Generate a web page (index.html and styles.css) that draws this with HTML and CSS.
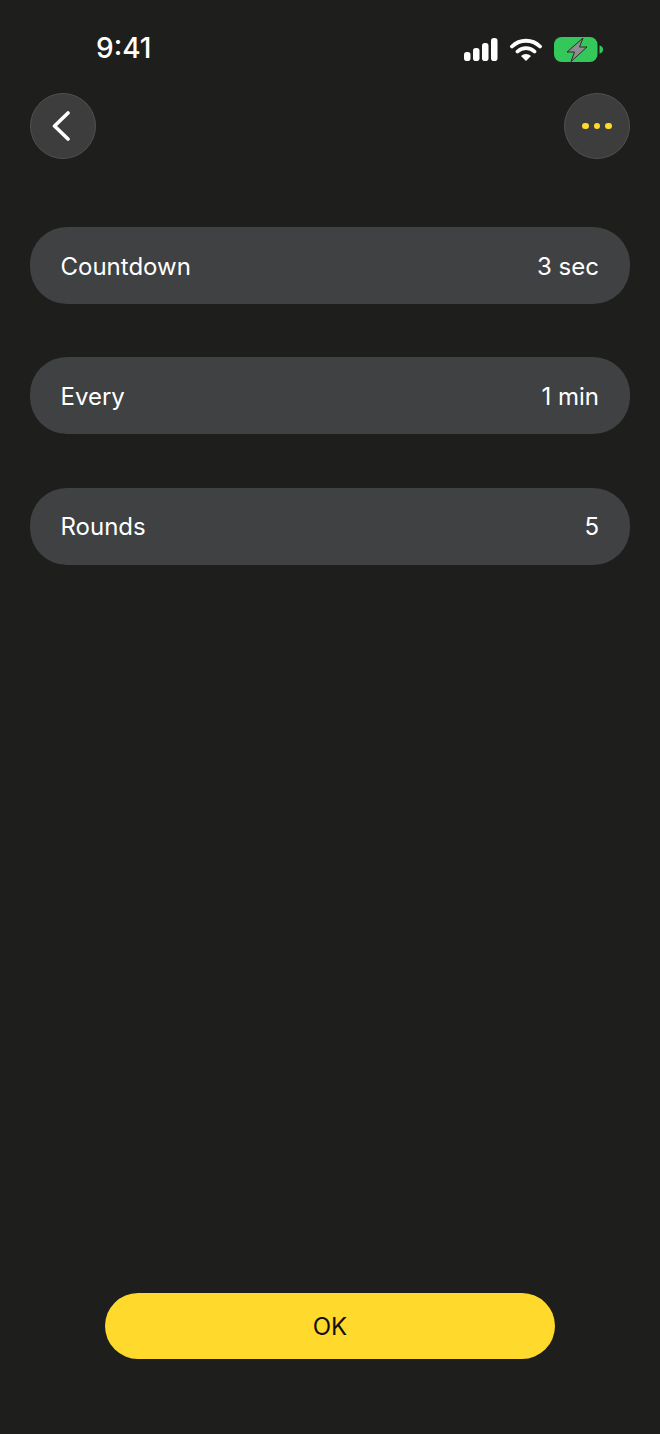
FILE: index.html
```html
<!DOCTYPE html>
<html lang="en">
<head>
<meta charset="utf-8">
<title>Interval timer</title>
<link rel="stylesheet" href="styles.css">
</head>
<body>
<div class="screen">
  <header class="status">
    <span class="time">9:41</span>
    <div class="status-icons">
      <svg class="signal" width="34" height="23" viewBox="0 0 34 23"><rect x="0" y="14" width="6.500" height="9" rx="2.800"/><rect x="9" y="10" width="6.500" height="13" rx="2.800"/><rect x="18" y="5" width="6.500" height="18" rx="2.800"/><rect x="27" y="0" width="6.500" height="23" rx="2.800"/></svg>
      <svg class="wifi" width="32" height="23" viewBox="0 0 32 23"><path d="M2 8.500C9.800 .8 22.200 .8 30 8.500M7.500 13.500C12.300 8.900 19.700 8.900 24.500 13.500" fill="none" stroke="#fff" stroke-width="3.800" stroke-linecap="round"/><path d="M11 18C13.800 15.300 18.200 15.300 21 18L16 23Z" fill="#fff"/></svg>
      <svg class="battery" width="50" height="25" viewBox="0 0 50 25"><rect x="0" y="0" width="43.500" height="25" rx="7.500" fill="#34c759"/><path d="M45.500 8.500c2.500.4 3.500 2 3.500 4s-1 3.600-3.500 4z" fill="#34c759"/><path d="M29 1 13 15h7.500L17 24.500 33 10h-7.500z" fill="#8e8e8e" stroke="#2b2b2b" stroke-width="1" stroke-linejoin="round"/></svg>
    </div>
  </header>
  <nav class="nav">
    <button class="round">
      <svg width="20" height="30" viewBox="0 0 20 30"><path d="M17 2 3.500 15 17 28" fill="none" stroke="#fff" stroke-width="3.600" stroke-linecap="round" stroke-linejoin="round"/></svg>
    </button>
    <button class="round">
      <span class="dots"><i class="dot"></i><i class="dot"></i><i class="dot"></i></span>
    </button>
  </nav>
  <main class="rows">
    <div class="row"><span>Countdown</span><span>3 sec</span></div>
    <div class="row"><span>Every</span><span>1 min</span></div>
    <div class="row"><span>Rounds</span><span>5</span></div>
  </main>
  <footer class="footer">
    <button class="ok">OK</button>
  </footer>
</div>
</body>
</html>
```
FILE: styles.css
```css
* { box-sizing: border-box; }
html, body { margin: 0; padding: 0; }
body { background: #1e1e1c; font-family: Inter, "Liberation Sans", sans-serif; color: #fff; }
.screen { width: 660px; height: 1434px; display: flex; flex-direction: column; overflow: hidden; }
.status { height: 93px; flex: none; display: flex; justify-content: space-between; align-items: flex-start; padding: 31px 56px 0 96px; }
.time { font-size: 28px; line-height: 35px; font-weight: 500; letter-spacing: 0; }
.status-icons { display: flex; align-items: center; gap: 12px; padding-top: 6px; }
.signal { fill: #fff; }
.nav { display: flex; justify-content: space-between; padding: 0 30px; flex: none; }
.round { width: 66px; height: 66px; border-radius: 50%; padding: 0; border: 1px solid #505050; background: #3d3d3d; display: flex; align-items: center; justify-content: center; }
.round svg { margin-right: 4px; }
.dots { display: flex; gap: 5.200px; }
.dot { width: 6.500px; height: 6.500px; border-radius: 50%; background: #ffd92b; }
.rows { display: flex; flex-direction: column; gap: 53.250px; padding: 68px 30px 0; flex: 1; }
.row { height: 77px; border-radius: 37px; background: #3f4143; padding: 1px 31px 0 30.500px; display: flex; justify-content: space-between; align-items: center; font-size: 24px; font-weight: 400; }
.footer { display: flex; justify-content: center; padding-bottom: 75px; flex: none; }
.ok { width: 450px; height: 66px; border: 0; border-radius: 33px; background: #ffd92b; color: #111; font: 400 24px Inter, "Liberation Sans", sans-serif; }
```
